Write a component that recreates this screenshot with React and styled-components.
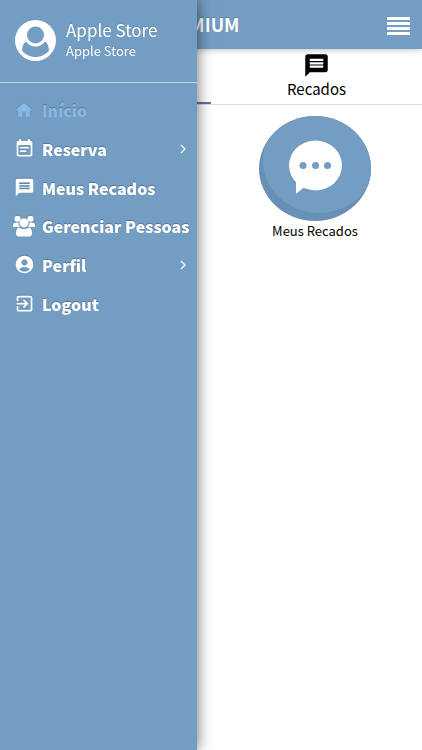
import styled, { createGlobalStyle } from "styled-components"
import { MdHome, MdEventNote, MdMessage, MdAccountCircle, MdExitToApp } from "react-icons/md"

// ============================== Style  ==============================
const GlobalStyle = createGlobalStyle`
    body {
        margin: 0;
        background: #ffffff;
        color: #000000;
        font-family: "Noto Sans CJK SC", "Noto Sans CJK JP", sans-serif;
    }

    * {
        box-sizing: border-box;
    }

    button {
        font: inherit;
        color: inherit;
        background: none;
        border: 0;
        padding: 0;
        cursor: pointer;
    }
    `

const Header = styled.header`
    display: flex;
    align-items: center;
    justify-content: space-between;
    height: 49px;
    padding: 2px 12px 0 154px;
    background: #749dc3;
    color: #ffffff;
    box-shadow: 0 1px 6px rgba(0, 0, 0, 0.25);
    `

const HeaderTitle = styled.h1`
    margin: 0;
    padding-bottom: 4px;
    font-size: 18px;
    font-weight: 700;
    line-height: 24px;
    text-shadow: 0 -1px 1px rgba(0, 0, 0, 0.2);
    `

const MenuButton = styled.button`
    display: flex;
    flex-direction: column;
    gap: 2px;
    width: 23px;
    `

const MenuBar = styled.span`
    height: 3px;
    background: #ffffff;
    `

const Tabs = styled.nav`
    display: grid;
    grid-template-columns: 1fr 1fr;
    border-bottom: 1px solid #dddddd;
    `

const Tab = styled.button`
    display: flex;
    flex-direction: column;
    align-items: center;
    height: 55px;
    padding-top: 3px;
    font-size: 15px;
    line-height: 20px;
    border-bottom: 2px solid ${(props) => (props.$active ? "#5f72b4" : "transparent")};
    `

const Shortcuts = styled.main`
    display: grid;
    grid-template-columns: 1fr 1fr;
    padding: 11px 2px 0 0;
    `

const Shortcut = styled.button`
    grid-column: 2;
    display: flex;
    flex-direction: column;
    align-items: center;
    font-size: 13px;
    line-height: 20px;
    `

const Drawer = styled.aside`
    position: fixed;
    top: 0;
    bottom: 0;
    left: 0;
    z-index: 1;
    width: 197px;
    background: #749dc3;
    color: #ffffff;
    box-shadow: 0 0 14px rgba(0, 0, 0, 0.6);
    `

const Profile = styled.div`
    display: flex;
    align-items: center;
    gap: 10px;
    height: 83px;
    padding: 0 0 2px 15px;
    border-bottom: 1px solid #c3d5e6;
    text-shadow: 0 -1px 1px rgba(0, 0, 0, 0.1);
    `

const ProfileName = styled.div`
    font-size: 17px;
    line-height: 22px;
    `

const ProfileDetail = styled.div`
    font-size: 13px;
    line-height: 20px;
    `

const MenuList = styled.ul`
    display: grid;
    grid-template-rows: repeat(6, 1fr);
    height: 232px;
    margin: 9px 0 0;
    padding: 0;
    list-style: none;
    `

const MenuItem = styled.a`
    display: flex;
    align-items: center;
    gap: 6px;
    height: 100%;
    padding: 0 11px 2px 12px;
    color: ${(props) => (props.$active ? "#88b9e4" : "#ffffff")};
    font-size: 16px;
    font-weight: 900;
    line-height: 24px;
    white-space: nowrap;
    text-decoration: none;
    text-shadow: 0 -1px 1px rgba(0, 0, 0, 0.25);
    `

const MenuIcon = styled.span`
    display: flex;
    justify-content: center;
    flex: none;
    width: 24px;
    filter: drop-shadow(0 -1px 0 rgba(0, 0, 0, 0.15));
    `

const MenuLabel = styled.span`
    flex: 1;
    min-width: 0;
    `

// ============================== Icons  ==============================
function AvatarIcon() {
    return (
        <svg width="41" height="41" viewBox="0 0 41 41" aria-hidden="true">
            <circle cx="20.5" cy="20.5" r="20.5" fill="#ffffff" />
            <path d="M11 21.500C8.500 23.500 7.200 26 7 30.500C10 34.500 15 37 20.500 37S31 34.500 34 30.500C33.800 26 32.500 23.500 30 21.500C27.500 25 24.500 26.500 20.500 26.500S13.500 25 11 21.500Z" fill="#749dc3" />
            <circle cx="20.500" cy="15" r="10" fill="#ffffff" />
            <circle cx="20.500" cy="15" r="8.500" fill="#749dc3" />
        </svg>
    )
}

function GroupIcon() {
    return (
        <svg width="24" height="22" viewBox="0 0 24 22" fill="currentColor" aria-hidden="true">
            <circle cx="5.500" cy="3.800" r="3" />
            <circle cx="18.500" cy="3.800" r="3" />
            <path d="M1 12V10.500Q1 7.500 3.500 7.500H6.300Q6.300 10.500 8 12ZM23 12V10.500Q23 7.500 20.500 7.500H17.700Q17.700 10.500 16 12Z" />
            <circle cx="12" cy="7.800" r="4.600" />
            <path d="M4 18Q4 12.500 7.500 12.500Q12 15.500 16.500 12.500Q20 12.500 20 18Q20 21.500 17 21.500H7Q4 21.500 4 18Z" />
        </svg>
    )
}

function ChevronIcon() {
    return (
        <svg width="10" height="10" viewBox="0 0 10 10" fill="none" stroke="currentColor" strokeWidth="1.200" aria-hidden="true">
            <path d="M2 1L6 5L2 9" />
        </svg>
    )
}

function BubbleIcon() {
    return (
        <svg width="112" height="105" viewBox="0 0 112 105" aria-hidden="true">
            <defs>
                <clipPath id="disc">
                    <ellipse cx="56" cy="52.500" rx="56" ry="52.500" />
                </clipPath>
            </defs>
            <g clipPath="url(#disc)">
                <rect width="112" height="105" fill="#6790b4" />
                <ellipse cx="60" cy="44.500" rx="56" ry="52.500" fill="#749dc3" />
            </g>
            <g transform="translate(0 1)" fill="#6a93b8">
                <ellipse cx="56.500" cy="49.500" rx="26.500" ry="25" />
                <path d="M37 64V78L48 69Z" />
            </g>
            <g fill="#ffffff">
                <ellipse cx="56.500" cy="49.500" rx="26.500" ry="25" />
                <path d="M37 64V78L48 69Z" />
            </g>
            <g fill="#749dc3">
                <circle cx="44" cy="49.500" r="3.500" />
                <circle cx="56.500" cy="49.500" r="3.500" />
                <circle cx="68.500" cy="49.500" r="3.500" />
            </g>
        </svg>
    )
}

const menuItems = [
    { label: "Início", icon: <MdHome size={20} />, active: true },
    { label: "Reserva", icon: <MdEventNote size={21} />, expandable: true },
    { label: "Meus Recados", icon: <MdMessage size={21} /> },
    { label: "Gerenciar Pessoas", icon: <GroupIcon /> },
    { label: "Perfil", icon: <MdAccountCircle size={21} />, expandable: true },
    { label: "Logout", icon: <MdExitToApp size={21} /> },
]

export default function App() {
    return (
        <>
            <GlobalStyle />

            <Drawer>
                <Profile>
                    <AvatarIcon />
                    <div>
                        <ProfileName>Apple Store</ProfileName>
                        <ProfileDetail>Apple Store</ProfileDetail>
                    </div>
                </Profile>

                <MenuList>
                    {menuItems.map((item) => (
                        <li key={item.label}>
                            <MenuItem href="#" $active={item.active}>
                                <MenuIcon>{item.icon}</MenuIcon>
                                <MenuLabel>{item.label}</MenuLabel>
                                {item.expandable && <ChevronIcon />}
                            </MenuItem>
                        </li>
                    ))}
                </MenuList>
            </Drawer>

            <Header>
                <HeaderTitle>PREMIUM</HeaderTitle>
                <MenuButton aria-label="Menu">
                    <MenuBar />
                    <MenuBar />
                    <MenuBar />
                    <MenuBar />
                </MenuButton>
            </Header>

            <Tabs>
                <Tab $active aria-label="Início" />
                <Tab>
                    <MdMessage size={27} />
                    Recados
                </Tab>
            </Tabs>

            <Shortcuts>
                <Shortcut>
                    <BubbleIcon />
                    Meus Recados
                </Shortcut>
            </Shortcuts>
        </>
    )
}
